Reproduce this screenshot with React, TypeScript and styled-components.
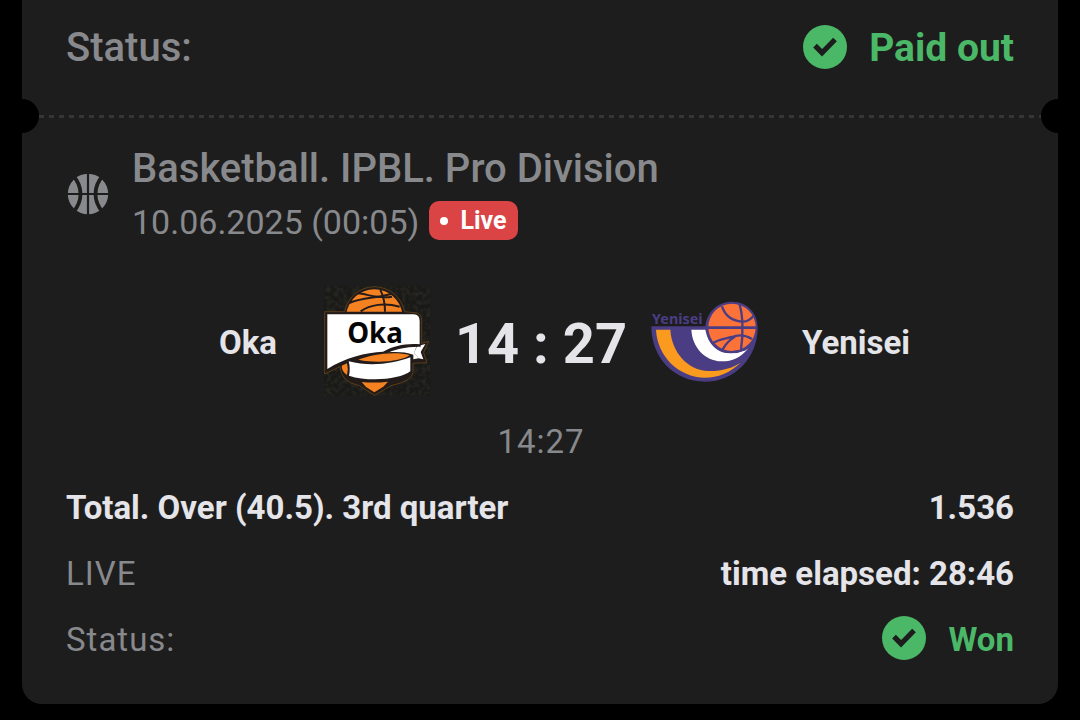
import React from 'react';
import styled, { createGlobalStyle } from 'styled-components';

const color = {
  page: '#000000',
  card: '#1d1d1d',
  muted: '#88898c',
  text: '#e4e4e9',
  green: '#4bb868',
  red: '#da4445',
  dash: '#353536',
};

const GlobalStyle = createGlobalStyle`
  * { box-sizing: border-box; }
  body {
    margin: 0;
    background: ${color.page};
    font-family: Roboto, "Liberation Sans", sans-serif;
    color: ${color.text};
  }
`;

const Page = styled.main`
  padding: 0 22px 16px;
  overflow-x: hidden;
`;

const Card = styled.article`
  background: ${color.card};
  border-radius: 0 0 20px 20px;
  padding-bottom: 32px;
`;

const Section = styled.section`
  padding: 0 44px;
`;

const Row = styled.div<{ $large?: boolean }>`
  display: flex;
  align-items: center;
  justify-content: space-between;
  height: ${(p) => (p.$large ? 95 : 66)}px;
  font-size: ${(p) => (p.$large ? 40 : 33)}px;
`;

const Label = styled.span<{ $medium?: boolean }>`
  color: ${color.muted};
  font-weight: ${(p) => (p.$medium ? 500 : 400)};
`;

const SpacedLabel = styled(Label)`
  letter-spacing: 1px;
`;

const Strong = styled.span`
  font-weight: 700;
`;

const Result = styled.span<{ $large?: boolean }>`
  display: flex;
  align-items: center;
  gap: 22px;
  color: ${color.green};
  font-size: ${(p) => (p.$large ? 39 : 33)}px;
  font-weight: 700;
`;

const Perforation = styled.div`
  display: flex;
  align-items: center;
  height: 34px;
  margin: 4px -17px 0;
`;

const Notch = styled.span`
  width: 34px;
  height: 34px;
  border-radius: 50%;
  background: ${color.page};
`;

const Dashes = styled.span`
  flex: 1;
  height: 3px;
  background: repeating-linear-gradient(90deg, ${color.dash} 0 5px, transparent 5px 10px);
`;

const EventHeader = styled.header`
  display: flex;
  align-items: center;
  gap: 22px;
  padding-top: 9px;
`;

const Title = styled.h1`
  margin: 0;
  color: ${color.muted};
  font-size: 40px;
  font-weight: 500;
  line-height: 53px;
`;

const When = styled.div`
  display: flex;
  align-items: center;
  gap: 10px;
  height: 53px;
  font-size: 34px;
`;

const LiveBadge = styled.span`
  display: flex;
  align-items: center;
  gap: 12px;
  height: 39px;
  margin-bottom: 2px;
  padding: 0 11px;
  border-radius: 10px;
  background: ${color.red};
  color: #ffffff;
  font-size: 25px;
  font-weight: 700;

  &::before {
    content: '';
    width: 8px;
    height: 8px;
    border-radius: 50%;
    background: currentColor;
  }
`;

const Match = styled.div`
  display: grid;
  grid-template-columns: 1fr 108px 220px 108px 1fr;
  align-items: center;
  height: 161px;
  padding: 25px 0 0 2px;
`;

const Team = styled.span<{ $home?: boolean }>`
  padding: 3px 46px 0 43px;
  font-size: 33px;
  font-weight: 700;
  text-align: ${(p) => (p.$home ? 'right' : 'left')};
`;

const Score = styled.strong`
  padding-top: 5px;
  font-size: 56px;
  font-weight: 700;
  text-align: center;
`;

const Periods = styled.div`
  height: 65px;
  padding-left: 2px;
  line-height: 66px;
  text-align: center;
  font-size: 33px;
`;

const Icon = styled.svg`
  display: block;
  flex: none;
`;

const LineIcon = styled(Icon)`
  margin-bottom: 2px;
`;

const CheckIcon = () => (
  <LineIcon width="44" height="44" viewBox="0 0 44 44" aria-hidden="true">
    <circle cx="22" cy="22" r="22" fill={color.green} />
    <path d="M12 20.700 19 27.700 32 14.500" fill="none" stroke={color.card} strokeWidth="5.200" />
  </LineIcon>
);

const BasketballIcon = () => (
  <LineIcon width="44" height="44" viewBox="0 0 44 44" aria-hidden="true">
    <circle cx="22" cy="22" r="20.2" fill={color.muted} />
    <g fill="none" stroke={color.card}>
      <path d="M22 1V43M1 22H43" strokeWidth="2.2" />
      <path d="M7 3.500Q14.500 12 14.500 22T7 40.500M37 3.500Q29.500 12 29.500 22T37 40.500" strokeWidth="3.800" />
    </g>
  </LineIcon>
);

const OkaLogo = () => (
  <Icon width="108" height="110" viewBox="39 32 324 330" role="img" aria-label="Oka logo">
    <filter id="grain" x="0" y="0" width="100%" height="100%">
      <feTurbulence type="fractalNoise" baseFrequency="0.08" numOctaves="2" seed="4" />
      <feColorMatrix values="0 0 0 0 0.17  0 0 0 0 0.15  0 0 0 0 0.1  1.6 0 0 0 -0.6" />
    </filter>
    <rect x="42" y="32" width="318" height="330" fill="#191917" />
    <rect x="42" y="32" width="318" height="330" filter="url(#grain)" opacity="0.25" />
    <path
      d="M104 109C114 62 148 36 193 34C239 36 273 62 284 109L322 113Q335 118 335 135V204L356 198L341 231L351 262L309 264V291Q306 318 243 331L194 360L148 331Q92 320 90 274L44 296V109Z"
      fill="#221b1a"
      stroke="#765018"
      strokeWidth="2"
    />
    <path d="M110 109C119 73 149 43 193 42C239 43 268 75 276 109Z" fill="#f58220" />
    <g fill="none" stroke="#241c1c" strokeWidth="6">
      <path d="M143 54C172 56 207 72 246 64" />
      <path d="M211 43C220 62 225 84 225 109" />
      <path d="M118 83C150 68 200 68 244 56" />
      <path d="M152 108C180 88 223 81 269 94" />
    </g>
    <path d="M52 117H311Q329 118 329 137V207C291 203 252 211 219 229C167 231 105 247 52 281Z" fill="#ffffff" />
    <path d="M232 231C262 218 294 213 320 213L312 233L326 249L310 252V238C285 229 258 229 232 231Z" fill="#ffffff" />
    <path d="M321 213 346 206 332 230 340 252 326 249 312 233Z" fill="#ffffff" />
    <path d="M219 235C250 219 288 210 332 211" fill="none" stroke="#241c1c" strokeWidth="6" />
    <path d="M145 253C176 240 249 225 299 239C279 256 207 266 145 253Z" fill="#f58220" />
    <path d="M95 271 111 264Q116 281 111 299Q96 290 95 271Z" fill="#f58220" />
    <path d="M116 258C181 275 250 265 301 246V288C272 312 177 321 117 301Q122 280 116 258Z" fill="#ffffff" />
    <path d="M155 320Q193 324 234 319L220 334 193 351 168 335Z" fill="#f58220" />
    <text x="195" y="204" textAnchor="middle" fontFamily="'Noto Sans', 'Open Sans', sans-serif" fontSize="83" fontWeight="700" fill="#050505">
      Oka
    </text>
  </Icon>
);

const YeniseiLogo = () => (
  <Icon width="108" height="84" viewBox="34 28 324 252" role="img" aria-label="Yenisei logo">
    <path d="M35 110H197C202 65 235 36 277 36C322 36 354 69 354 114C354 203 286 276 196 276C103 276 35 204 35 110Z" fill="#4b3d84" />
    <path d="M49 120H92C96 187 143 242 207 244C245 245 277 235 303 219C271 249 235 264 196 264C117 263 53 200 49 120Z" fill="#fa9a1f" />
    <path d="M155 120H197C205 165 235 190 272 190C291 190 309 185 325 177C302 205 274 216 245 215C195 213 158 173 155 120Z" fill="#ffffff" />
    <circle cx="277" cy="113" r="71" fill="#fb7339" />
    <g fill="none" stroke="#4b3d84" strokeWidth="7">
      <path d="M199 114H351" strokeWidth="8" />
      <path d="M299 42C310 75 311 133 304 180" />
      <path d="M247 50C256 78 276 93 307 96C323 97 333 89 342 78" />
      <path d="M221 160C236 149 254 148 277 142C299 133 320 138 337 148M249 179C258 163 271 149 286 141" />
    </g>
    <path d="M205 135C215 168 240 188 272 188C290 188 306 184 320 178" fill="none" stroke="#4b3d84" strokeWidth="6" />
    <text x="113" y="104" textAnchor="middle" fontFamily="'Noto Sans', 'Open Sans', sans-serif" fontSize="43" fontWeight="700" fill="#4b3d84">
      Yenisei
    </text>
  </Icon>
);

export default function App() {
  return (
    <>
      <GlobalStyle />
      <Page>
        <Card>
          <Section>
            <Row $large>
              <Label $medium>Status:</Label>
              <Result $large>
                <CheckIcon />
                Paid out
              </Result>
            </Row>
          </Section>
          <Perforation>
            <Notch />
            <Dashes />
            <Notch />
          </Perforation>
          <Section>
            <EventHeader>
              <BasketballIcon />
              <div>
                <Title>Basketball. IPBL. Pro Division</Title>
                <When>
                  <Label as="time">10.06.2025 (00:05)</Label>
                  <LiveBadge>Live</LiveBadge>
                </When>
              </div>
            </EventHeader>
            <Match>
              <Team $home>Oka</Team>
              <OkaLogo />
              <Score>14 : 27</Score>
              <YeniseiLogo />
              <Team>Yenisei</Team>
            </Match>
            <Periods>
              <SpacedLabel>14:27</SpacedLabel>
            </Periods>
            <Row>
              <Strong>Total. Over (40.5). 3rd quarter</Strong>
              <Strong>1.536</Strong>
            </Row>
            <Row>
              <SpacedLabel>LIVE</SpacedLabel>
              <Strong>time elapsed: 28:46</Strong>
            </Row>
            <Row>
              <SpacedLabel>Status:</SpacedLabel>
              <Result>
                <CheckIcon />
                Won
              </Result>
            </Row>
          </Section>
        </Card>
      </Page>
    </>
  );
}
